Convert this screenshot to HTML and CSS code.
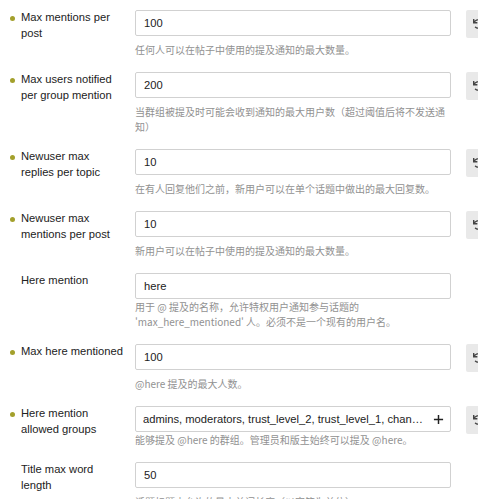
FILE: index.html
```html
<!DOCTYPE html>
<html lang="zh-CN">
<head>
    <meta charset="UTF-8">
    <meta name="viewport" content="width=device-width, initial-scale=1.0">
    <title>设置</title>
    <link rel="stylesheet" href="styles.css">
</head>
<body>
    <div class="settings">
        <div class="setting overridden">
            <div class="setting-label"><h3>Max mentions per post</h3></div>
            <div class="setting-value">
                <input class="input-setting" type="text" value="100">
                <div class="desc">任何人可以在帖子中使用的提及通知的最大数量。</div>
            </div>
            <div class="setting-controls">
                <button class="reset" title="重置"><svg viewBox="0 0 512 512"><path d="M212.333 224.333H12c-6.627 0-12-5.373-12-12V12C0 5.373 5.373 0 12 0h48c6.627 0 12 5.373 12 12v78.112C117.773 39.279 184.26 7.47 258.175 8.007c136.906.994 246.448 111.623 246.157 248.532C504.041 393.258 393.12 504 256.333 504c-64.089 0-122.496-24.313-166.51-64.215-5.099-4.622-5.334-12.554-.467-17.420l33.967-33.967c4.474-4.474 11.662-4.717 16.401-.525C170.76 415.336 211.58 432 256.333 432c97.268 0 176-78.716 176-176 0-97.267-78.716-176-176-176-58.496 0-110.28 28.476-142.274 72.333h98.274c6.627 0 12 5.373 12 12v48c0 6.627-5.373 12-12 12z"/></svg></button>
            </div>
        </div>

        <div class="setting overridden">
            <div class="setting-label"><h3>Max users notified per group mention</h3></div>
            <div class="setting-value">
                <input class="input-setting" type="text" value="200">
                <div class="desc">当群组被提及时可能会收到通知的最大用户数（超过阈值后将不发送通知）</div>
            </div>
            <div class="setting-controls">
                <button class="reset" title="重置"><svg viewBox="0 0 512 512"><path d="M212.333 224.333H12c-6.627 0-12-5.373-12-12V12C0 5.373 5.373 0 12 0h48c6.627 0 12 5.373 12 12v78.112C117.773 39.279 184.26 7.47 258.175 8.007c136.906.994 246.448 111.623 246.157 248.532C504.041 393.258 393.12 504 256.333 504c-64.089 0-122.496-24.313-166.51-64.215-5.099-4.622-5.334-12.554-.467-17.420l33.967-33.967c4.474-4.474 11.662-4.717 16.401-.525C170.76 415.336 211.58 432 256.333 432c97.268 0 176-78.716 176-176 0-97.267-78.716-176-176-176-58.496 0-110.28 28.476-142.274 72.333h98.274c6.627 0 12 5.373 12 12v48c0 6.627-5.373 12-12 12z"/></svg></button>
            </div>
        </div>

        <div class="setting overridden">
            <div class="setting-label"><h3>Newuser max replies per topic</h3></div>
            <div class="setting-value">
                <input class="input-setting" type="text" value="10">
                <div class="desc">在有人回复他们之前，新用户可以在单个话题中做出的最大回复数。</div>
            </div>
            <div class="setting-controls">
                <button class="reset" title="重置"><svg viewBox="0 0 512 512"><path d="M212.333 224.333H12c-6.627 0-12-5.373-12-12V12C0 5.373 5.373 0 12 0h48c6.627 0 12 5.373 12 12v78.112C117.773 39.279 184.26 7.47 258.175 8.007c136.906.994 246.448 111.623 246.157 248.532C504.041 393.258 393.12 504 256.333 504c-64.089 0-122.496-24.313-166.51-64.215-5.099-4.622-5.334-12.554-.467-17.420l33.967-33.967c4.474-4.474 11.662-4.717 16.401-.525C170.76 415.336 211.58 432 256.333 432c97.268 0 176-78.716 176-176 0-97.267-78.716-176-176-176-58.496 0-110.28 28.476-142.274 72.333h98.274c6.627 0 12 5.373 12 12v48c0 6.627-5.373 12-12 12z"/></svg></button>
            </div>
        </div>

        <div class="setting overridden">
            <div class="setting-label"><h3>Newuser max mentions per post</h3></div>
            <div class="setting-value">
                <input class="input-setting" type="text" value="10">
                <div class="desc">新用户可以在帖子中使用的提及通知的最大数量。</div>
            </div>
            <div class="setting-controls">
                <button class="reset" title="重置"><svg viewBox="0 0 512 512"><path d="M212.333 224.333H12c-6.627 0-12-5.373-12-12V12C0 5.373 5.373 0 12 0h48c6.627 0 12 5.373 12 12v78.112C117.773 39.279 184.26 7.47 258.175 8.007c136.906.994 246.448 111.623 246.157 248.532C504.041 393.258 393.12 504 256.333 504c-64.089 0-122.496-24.313-166.51-64.215-5.099-4.622-5.334-12.554-.467-17.420l33.967-33.967c4.474-4.474 11.662-4.717 16.401-.525C170.76 415.336 211.58 432 256.333 432c97.268 0 176-78.716 176-176 0-97.267-78.716-176-176-176-58.496 0-110.28 28.476-142.274 72.333h98.274c6.627 0 12 5.373 12 12v48c0 6.627-5.373 12-12 12z"/></svg></button>
            </div>
        </div>

        <div class="setting tight">
            <div class="setting-label"><h3>Here mention</h3></div>
            <div class="setting-value">
                <input class="input-setting" type="text" value="here">
                <div class="desc">用于 @ 提及的名称，允许特权用户通知参与话题的<br>'max_here_mentioned' 人。必须不是一个现有的用户名。</div>
            </div>
        </div>

        <div class="setting overridden">
            <div class="setting-label"><h3>Max here mentioned</h3></div>
            <div class="setting-value">
                <input class="input-setting" type="text" value="100">
                <div class="desc">@here 提及的最大人数。</div>
            </div>
            <div class="setting-controls">
                <button class="reset" title="重置"><svg viewBox="0 0 512 512"><path d="M212.333 224.333H12c-6.627 0-12-5.373-12-12V12C0 5.373 5.373 0 12 0h48c6.627 0 12 5.373 12 12v78.112C117.773 39.279 184.26 7.47 258.175 8.007c136.906.994 246.448 111.623 246.157 248.532C504.041 393.258 393.12 504 256.333 504c-64.089 0-122.496-24.313-166.51-64.215-5.099-4.622-5.334-12.554-.467-17.420l33.967-33.967c4.474-4.474 11.662-4.717 16.401-.525C170.76 415.336 211.58 432 256.333 432c97.268 0 176-78.716 176-176 0-97.267-78.716-176-176-176-58.496 0-110.28 28.476-142.274 72.333h98.274c6.627 0 12 5.373 12 12v48c0 6.627-5.373 12-12 12z"/></svg></button>
            </div>
        </div>

        <div class="setting overridden tight">
            <div class="setting-label"><h3>Here mention allowed groups</h3></div>
            <div class="setting-value">
                <div class="list-setting">
                    <span class="list-names">admins, moderators, trust_level_2, trust_level_1, change_settings</span>
                    <svg class="plus" viewBox="0 0 12 12"><path d="M6 1v10M1 6h10"/></svg>
                </div>
                <div class="desc">能够提及 @here 的群组。管理员和版主始终可以提及 @here。</div>
            </div>
            <div class="setting-controls">
                <button class="reset" title="重置"><svg viewBox="0 0 512 512"><path d="M212.333 224.333H12c-6.627 0-12-5.373-12-12V12C0 5.373 5.373 0 12 0h48c6.627 0 12 5.373 12 12v78.112C117.773 39.279 184.26 7.47 258.175 8.007c136.906.994 246.448 111.623 246.157 248.532C504.041 393.258 393.12 504 256.333 504c-64.089 0-122.496-24.313-166.51-64.215-5.099-4.622-5.334-12.554-.467-17.420l33.967-33.967c4.474-4.474 11.662-4.717 16.401-.525C170.76 415.336 211.58 432 256.333 432c97.268 0 176-78.716 176-176 0-97.267-78.716-176-176-176-58.496 0-110.28 28.476-142.274 72.333h98.274c6.627 0 12 5.373 12 12v48c0 6.627-5.373 12-12 12z"/></svg></button>
            </div>
        </div>

        <div class="setting">
            <div class="setting-label"><h3>Title max word length</h3></div>
            <div class="setting-value">
                <input class="input-setting" type="text" value="50">
                <div class="desc">话题标题中允许的最大单词长度（以字符为单位）。</div>
            </div>
        </div>
    </div>
</body>
</html>
```

FILE: styles.css
```css
body, html {
    margin: 0;
    background: #fff;
    overflow: hidden;
}

body {
    font-family: 'Liberation Sans', Arial, 'Noto Sans CJK SC', sans-serif;
    font-size: 11.2px;
    color: #222;
}

.settings {
    padding-top: 9px;
}

.setting {
    display: flex;
    align-items: flex-start;
    margin-bottom: 14px;
}

.setting-label {
    position: relative;
    flex: 0 0 135px;
    box-sizing: border-box;
    padding-left: 21px;
}

.setting-label h3 {
    width: 104px;
    margin: 0;
    font-size: 11.2px;
    font-weight: normal;
    line-height: 16px;
    color: #222;
}

/* little dot for settings that differ from the default */
.overridden .setting-label::before {
    content: "";
    position: absolute;
    left: 10px;
    top: 7px;
    width: 5px;
    height: 5px;
    border-radius: 50%;
    background: #a3a02c;
}

.setting-value {
    flex: 0 0 316px;
    padding-top: 1px;
}

.input-setting, .list-setting {
    display: block;
    box-sizing: border-box;
    width: 316px;
    height: 26px;
    margin: 0;
    padding: 0 8px;
    border: 1px solid #d1d1d1;
    border-radius: 2px;
    background: #fff;
    font-family: 'Liberation Sans', Arial, sans-serif;
    font-size: 11.2px;
    color: #222;
    outline: none;
}

.list-setting {
    display: flex;
    align-items: center;
    padding-left: 7px;
    padding-right: 6px;
}

.list-names {
    flex: 1;
    min-width: 0;
    overflow: hidden;
    white-space: nowrap;
    text-overflow: ellipsis;
}

.plus {
    flex: 0 0 11px;
    width: 11px;
    height: 11px;
    margin-left: 8px;
    stroke: #222;
    stroke-width: 1.6;
    fill: none;
}

.desc {
    margin-top: 6px;
    font-family: 'Noto Sans CJK SC', 'Liberation Sans', sans-serif;
    font-size: 10px;
    line-height: 15px;
    color: #919191;
}

.tight .desc {
    margin-top: 0;
}

.setting-controls {
    flex: 0 0 auto;
    margin-left: 15px;
    padding-top: 1px;
}

.reset {
    display: block;
    width: 32px;
    height: 28px;
    padding: 0 0 0 7px;
    border: none;
    border-radius: 2px;
    background: #e9e9e9;
    text-align: left;
    cursor: pointer;
}

.reset svg {
    display: block;
    width: 10px;
    height: 10px;
    fill: #444;
}
```
